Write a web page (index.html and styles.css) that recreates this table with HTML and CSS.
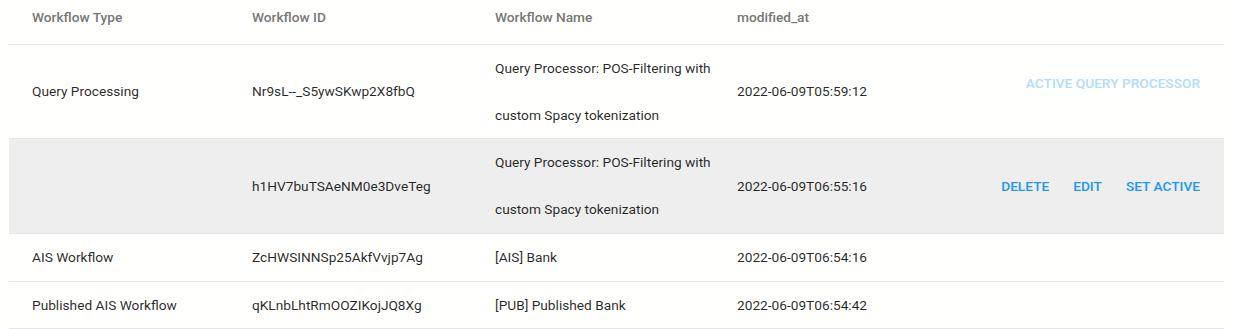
FILE: index.html
```html
<!DOCTYPE html>
<html>
<head>
<meta charset="utf-8">
<link rel="stylesheet" href="styles.css">
</head>
<body>
<div class="table">
  <div class="row head">
    <div class="cell">Workflow Type</div>
    <div class="cell">Workflow ID</div>
    <div class="cell">Workflow Name</div>
    <div class="cell">modified_at</div>
    <div class="cell actions"></div>
  </div>
  <div class="row">
    <div class="cell">Query Processing</div>
    <div class="cell">Nr9sL--_S5ywSKwp2X8fbQ</div>
    <div class="cell">Query Processor: POS-Filtering with<br>custom Spacy tokenization</div>
    <div class="cell">2022-06-09T05:59:12</div>
    <div class="cell actions"><span class="btn disabled raised">ACTIVE QUERY PROCESSOR</span></div>
  </div>
  <div class="row hover">
    <div class="cell"></div>
    <div class="cell">h1HV7buTSAeNM0e3DveTeg</div>
    <div class="cell">Query Processor: POS-Filtering with<br>custom Spacy tokenization</div>
    <div class="cell">2022-06-09T06:55:16</div>
    <div class="cell actions"><span class="btn">DELETE</span><span class="btn">EDIT</span><span class="btn">SET ACTIVE</span></div>
  </div>
  <div class="row">
    <div class="cell">AIS Workflow</div>
    <div class="cell">ZcHWSINNSp25AkfVvjp7Ag</div>
    <div class="cell">[AIS] Bank</div>
    <div class="cell">2022-06-09T06:54:16</div>
    <div class="cell actions"></div>
  </div>
  <div class="row">
    <div class="cell">Published AIS Workflow</div>
    <div class="cell">qKLnbLhtRmOOZIKojJQ8Xg</div>
    <div class="cell">[PUB] Published Bank</div>
    <div class="cell">2022-06-09T06:54:42</div>
    <div class="cell actions"></div>
  </div>
</div>
</body>
</html>
```
FILE: styles.css
```css
html, body {
  margin: 0;
  padding: 0;
  background: #fffffd;
}
body {
  font-family: Roboto, "Liberation Sans", sans-serif;
  font-size: 13.7px;
  color: rgba(0, 0, 0, 0.85);
}
.table {
  margin-left: 9px;
  width: 1215px;
}
.row {
  display: grid;
  grid-template-columns: 220px 243px 242px 1fr auto;
  align-items: center;
  border-bottom: 1px solid #e6e6e6;
  line-height: 46.5px;
}
.row.head {
  height: 45px;
  align-items: start;
  line-height: 20px;
  padding-top: 7px;
  box-sizing: border-box;
  color: #777;
  font-weight: 500;
}
.row.hover {
  background: #eeeeee;
  line-height: 47px;
}
.cell {
  padding-left: 23px;
  white-space: nowrap;
}
.actions {
  padding-right: 24px;
  display: flex;
  gap: 24px;
  justify-content: flex-end;
}
.btn {
  font-weight: 500;
  color: #2196f3;
  text-transform: uppercase;
}
.btn.disabled {
  color: #b3dbfb;
}
.btn.raised {
  margin-bottom: 16px;
}
```
